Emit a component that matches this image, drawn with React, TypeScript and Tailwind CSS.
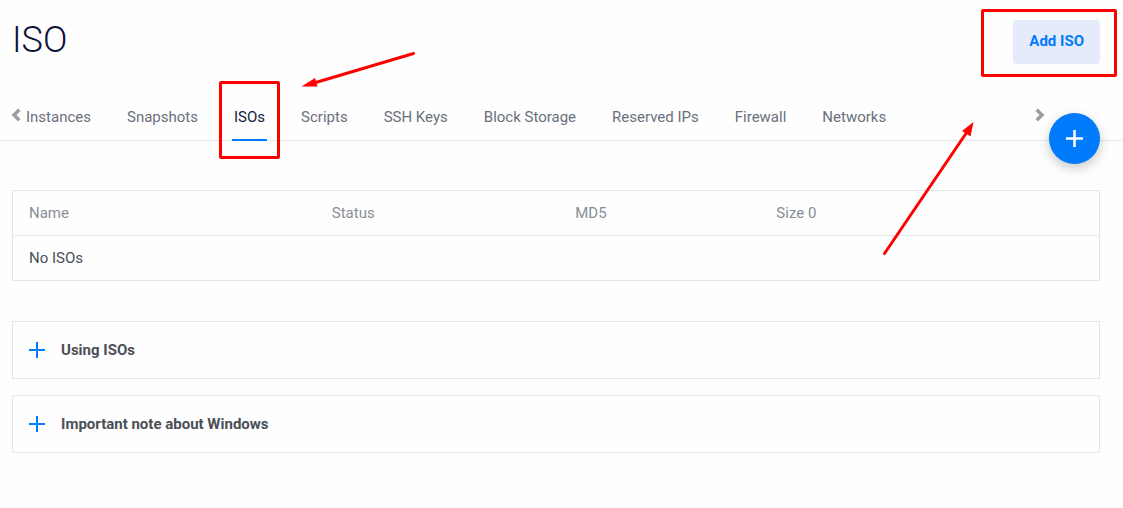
import React from "react";

const tabs = [
  "Instances",
  "Snapshots",
  "ISOs",
  "Scripts",
  "SSH Keys",
  "Block Storage",
  "Reserved IPs",
  "Firewall",
  "Networks",
];

const notes = ["Using ISOs", "Important note about Windows"];

function Chevron({ flip = false }: { flip?: boolean }) {
  return (
    <svg
      viewBox="0 0 10 14"
      className={flip ? "h-[14px] w-[10px] rotate-180" : "h-[14px] w-[10px]"}
      fill="none"
      stroke="#9b9fa5"
      strokeWidth="3.4"
      aria-hidden="true"
    >
      <path d="M8.300 1.700 3 7l5.300 5.300" />
    </svg>
  );
}

function Plus({ className }: { className: string }) {
  return (
    <svg viewBox="0 0 16 16" className={className} fill="none" stroke="currentColor" strokeWidth="2" aria-hidden="true">
      <path d="M8 0v16M0 8h16" />
    </svg>
  );
}

function Highlight({ className }: { className: string }) {
  return (
    <span
      aria-hidden="true"
      className={`pointer-events-none absolute rounded-xs border-3 border-[#ff0000] ${className}`}
    />
  );
}

export default function App() {
  return (
    <div className="relative min-h-screen bg-[#fefefe] font-['Roboto',sans-serif] text-[15px] leading-5 text-[#4b4f57]">
      <header className="flex items-start justify-between pt-5 pr-[23px] pl-3">
        <h1 className="text-4xl leading-10 font-light text-[#0d1238]">ISO</h1>
        <div className="relative">
          <button type="button" className="h-11 rounded-sm bg-[#e5ebfb] px-4 pb-0.5 font-bold text-[#007bfc]">
            Add ISO
          </button>
          <Highlight className="-top-[11px] -right-[17px] -bottom-[13px] -left-8" />
        </div>
      </header>

      <nav aria-label="Products" className="relative mt-7 flex h-[49px] border-b border-[#e4e5e9]">
        <button type="button" aria-label="Previous tabs" className="flex items-start pt-4 pl-[11px]">
          <Chevron />
        </button>
        <ul className="ml-[3px] flex flex-1 gap-8">
          {tabs.map((tab) => {
            const active = tab === "ISOs";
            return (
              <li key={tab} className="relative shrink-0">
                <a
                  href="#"
                  aria-current={active ? "page" : undefined}
                  className={
                    active
                      ? "block h-[49px] border-b-2 border-[#007bfc] px-0.5 pt-[15px] text-[#14193c]"
                      : "block h-[49px] px-0.5 pt-[15px] text-[#69707d]"
                  }
                >
                  {tab}
                </a>
                {active && <Highlight className="-top-[11px] -right-[13px] -bottom-[19px] -left-[13px]" />}
              </li>
            );
          })}
        </ul>
        <button type="button" aria-label="Next tabs" className="mr-[78px] flex items-start pt-4">
          <Chevron flip />
        </button>
        <button
          type="button"
          aria-label="Deploy new"
          className="absolute top-[21px] right-[23px] flex size-[51px] items-center justify-center rounded-full bg-[#007bfc] text-white shadow-[0_4px_12px_rgba(0,0,0,0.22)]"
        >
          <Plus className="size-[17px] stroke-[2.4]" />
        </button>
      </nav>

      <main className="pt-[49px] pr-[23px] pl-3">
        <table className="w-full table-fixed border-collapse border border-[#e4e5e9] text-left">
          <thead>
            <tr className="h-[45px] border-b border-[#e4e5e9] text-[#888e98]">
              <th className="w-[27.9%] px-4 font-normal">Name</th>
              <th className="w-[22.4%] px-4 font-normal">Status</th>
              <th className="w-[18.5%] px-4 font-normal">MD5</th>
              <th className="px-4 font-normal">Size 0</th>
            </tr>
          </thead>
          <tbody>
            <tr className="h-[45px]">
              <td colSpan={4} className="px-4">
                No ISOs
              </td>
            </tr>
          </tbody>
        </table>

        <div className="mt-10 flex flex-col gap-4">
          {notes.map((note) => (
            <button
              key={note}
              type="button"
              aria-expanded="false"
              className="flex h-[58px] w-full items-center gap-4 border border-[#e4e5e9] px-4 text-left font-bold"
            >
              <Plus className="size-4 text-[#007bfc]" />
              {note}
            </button>
          ))}
        </div>
      </main>

      <svg
        className="pointer-events-none absolute top-[50px] left-[300px] h-10 w-[118px]"
        viewBox="300 50 118 40"
        aria-hidden="true"
      >
        <path d="M413.500 53.500 314 83" stroke="#ff0000" strokeWidth="3" strokeLinecap="round" />
        <path d="M301.500 86.500 315 78l2.500 8.500Z" fill="#ff0000" />
      </svg>
      <svg
        className="pointer-events-none absolute top-[120px] left-[880px] h-[138px] w-[96px]"
        viewBox="880 120 96 138"
        aria-hidden="true"
      >
        <path d="M884.500 253.500 967 132" stroke="#ff0000" strokeWidth="3" strokeLinecap="round" />
        <path d="M973.500 122 970.500 136.500 966 133.500 962 131Z" fill="#ff0000" />
      </svg>
    </div>
  );
}
